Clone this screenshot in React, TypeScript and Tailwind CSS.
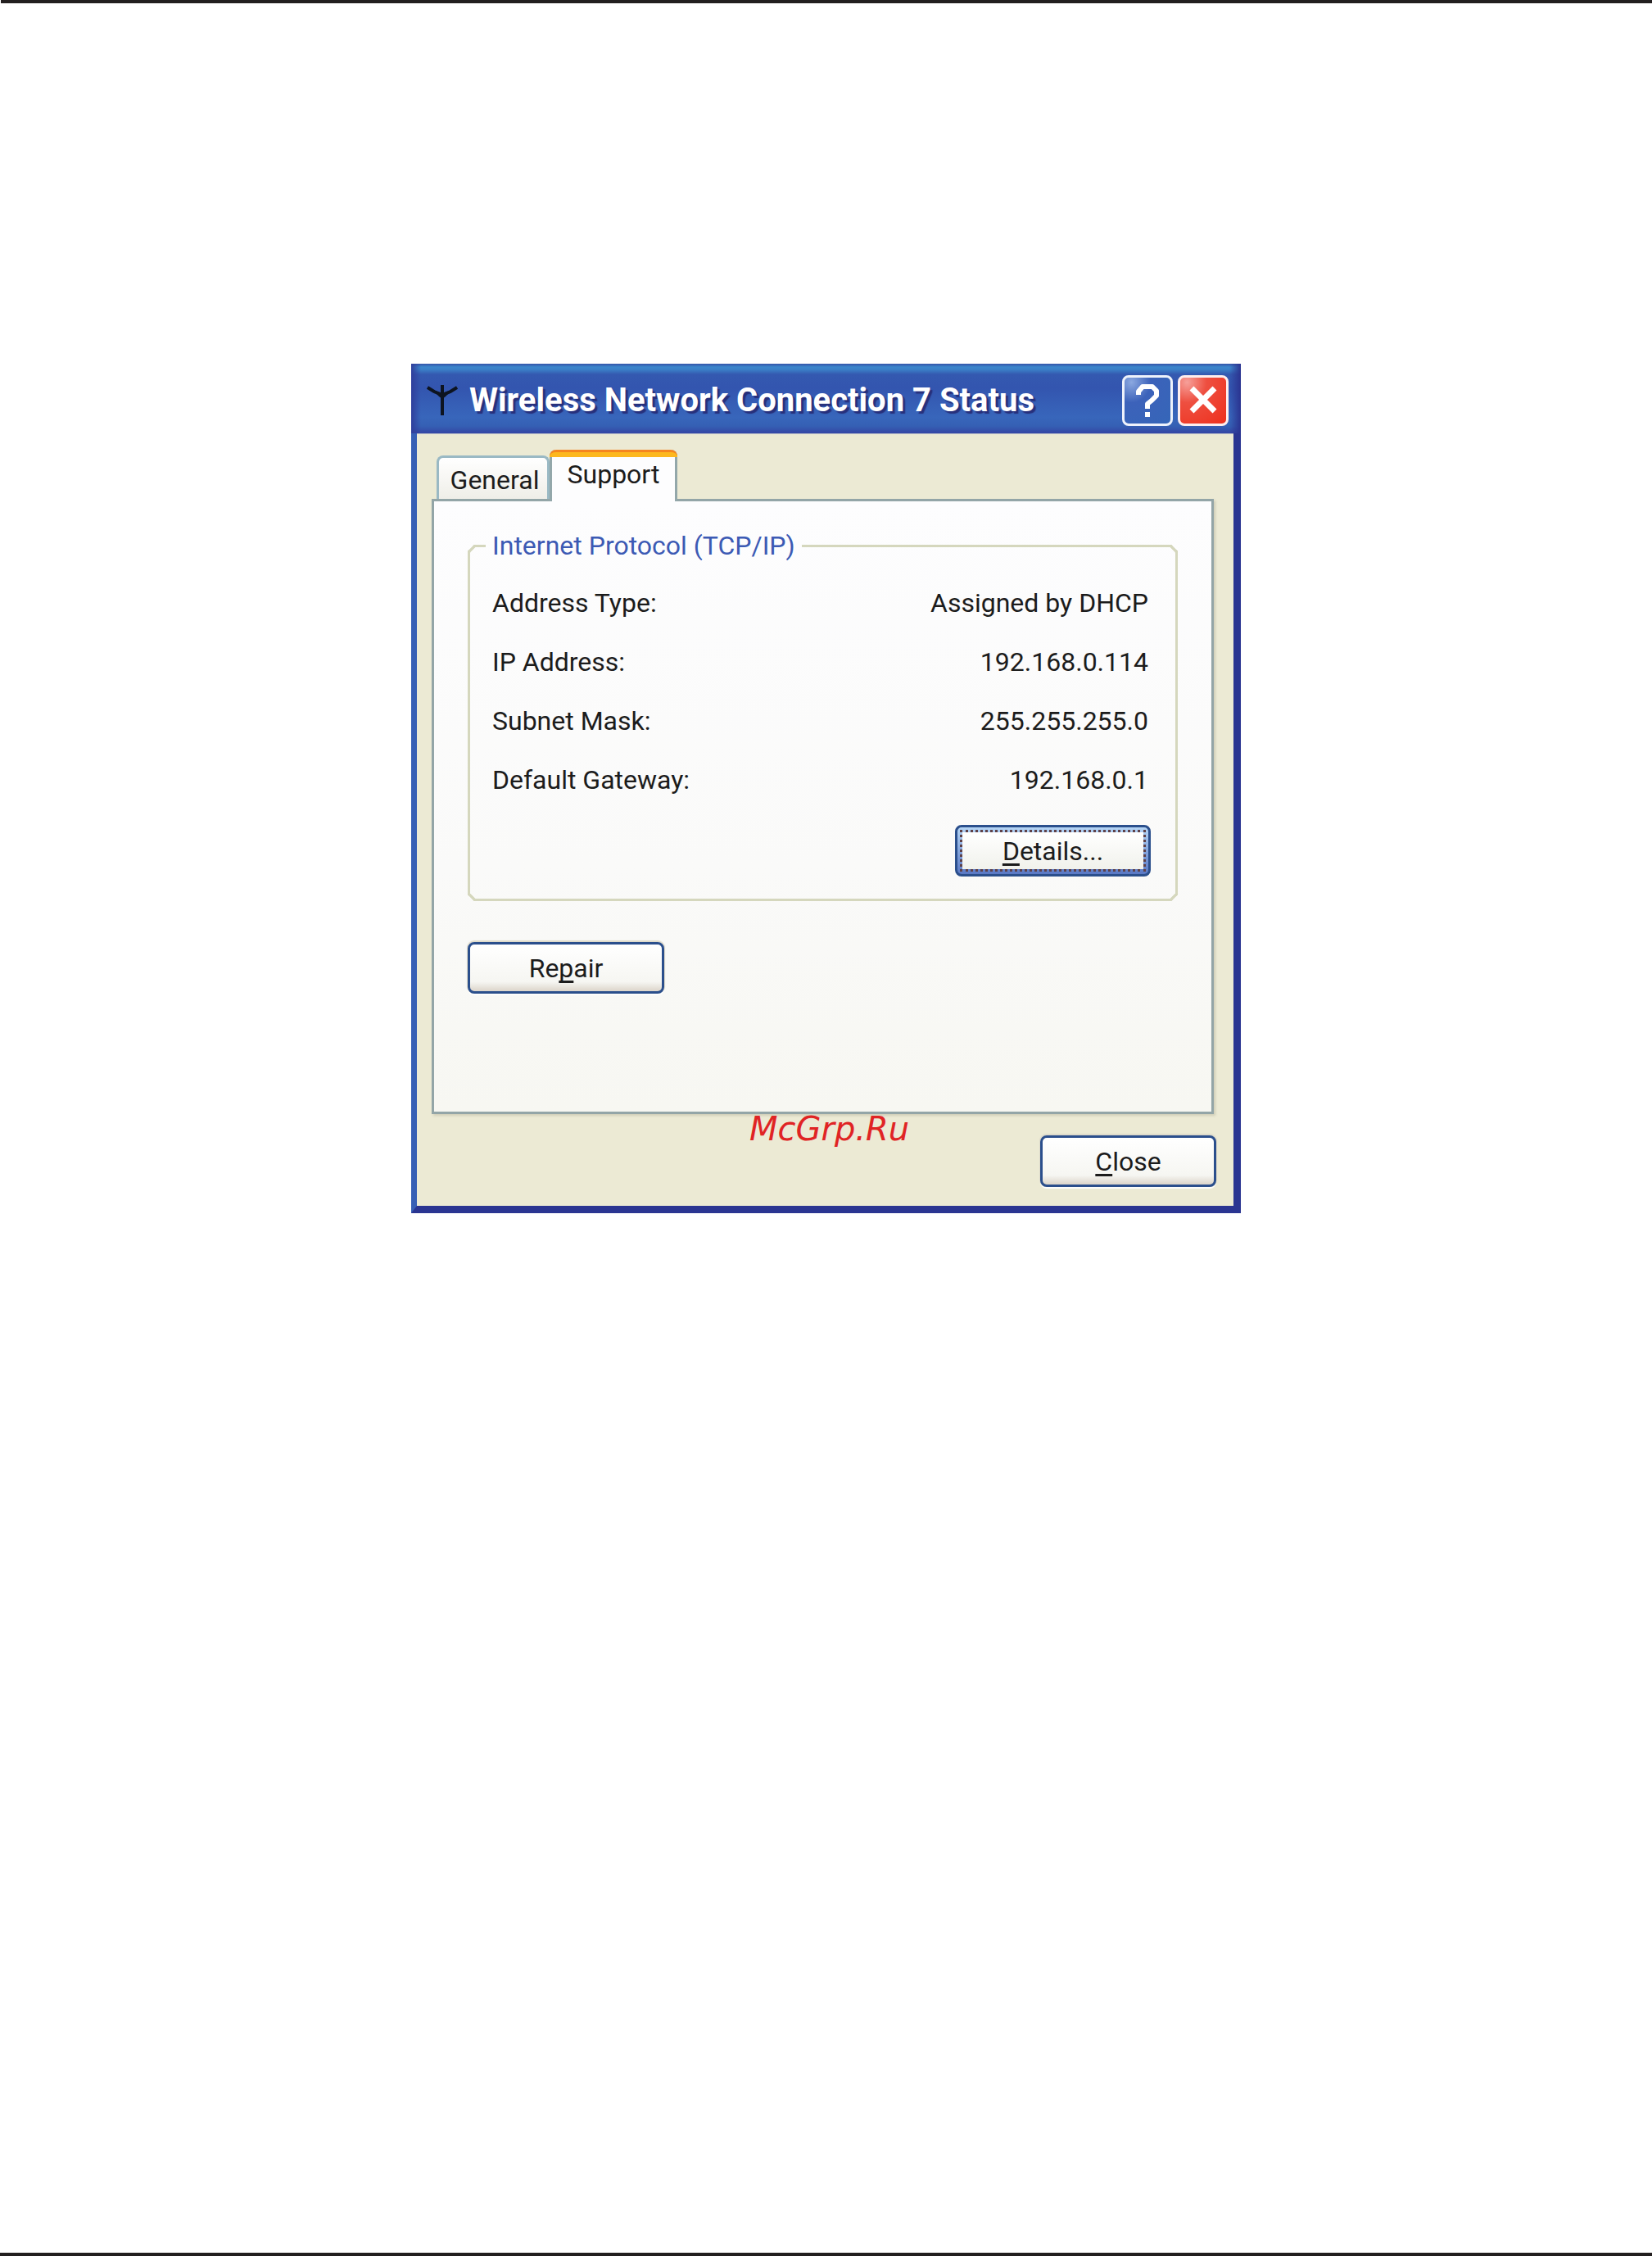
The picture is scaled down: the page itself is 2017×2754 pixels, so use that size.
import React from "react";

const details = [
  { label: "Address Type:", value: "Assigned by DHCP" },
  { label: "IP Address:", value: "192.168.0.114" },
  { label: "Subnet Mask:", value: "255.255.255.0" },
  { label: "Default Gateway:", value: "192.168.0.1" },
];

function AntennaIcon() {
  return (
    <svg viewBox="0 0 38 38" className="h-[38px] w-[38px] shrink-0" aria-hidden="true">
      <path
        d="M19 0V37M1 3L9 8L19 12L29 8L37 3"
        fill="none"
        stroke="#0d1420"
        strokeWidth="4"
      />
      <path d="M7 6L19 10L31 6L23 14L19 17L15 14Z" fill="#0d1420" />
    </svg>
  );
}

function HelpIcon() {
  return (
    <svg viewBox="3 3 56 56" className="h-full w-full" aria-hidden="true">
      <path
        d="M20 24V20L25 14H37L42 19V25L36 31L31 35V41"
        fill="none"
        stroke="#fff"
        strokeWidth="6"
        strokeLinejoin="round"
      />
      <rect x="28" y="45" width="6" height="6" fill="#fff" />
    </svg>
  );
}

function CloseIcon() {
  return (
    <svg viewBox="3 3 56 56" className="h-full w-full" aria-hidden="true">
      <path d="M17 16L45 44M45 16L17 44" fill="none" stroke="#fff" strokeWidth="7" />
    </svg>
  );
}

type PushButtonProps = {
  className: string;
  focused?: boolean;
  children: React.ReactNode;
};

function PushButton({ className, focused = false, children }: PushButtonProps) {
  return (
    <button
      type="button"
      className={`flex h-[63px] items-center justify-center rounded-lg border-3 border-[#2b4f8c] ${
        focused
          ? "bg-linear-to-b from-[#b5d5f5] to-[#5a78c4] p-[3px]"
          : "bg-linear-to-b from-white via-[#f6f6f2] via-80% to-[#dcd5ca] shadow-[0_-1px_1px_1px_#dedaca,0_2px_1px_#ffffff]"
      } ${className}`}
    >
      {focused ? (
        <span className="flex h-full w-full items-center justify-center border-3 border-dotted border-[#5e4148] bg-linear-to-b from-white to-[#f1f2ec] bg-clip-padding">
          <span>{children}</span>
        </span>
      ) : (
        <span>{children}</span>
      )}
    </button>
  );
}

function Key({ children }: { children: React.ReactNode }) {
  return (
    <span className="underline decoration-3 underline-offset-4 [text-decoration-skip-ink:none]">
      {children}
    </span>
  );
}

export default function App() {
  return (
    <div className="flex min-h-screen flex-col bg-white">
      <div className="ml-px h-1 bg-[#231f20]" />
      <main className="grow pt-[440px] pb-10">
        <section
          aria-label="Wireless Network Connection 7 Status"
          className="mx-auto flex w-[1013px] max-w-full flex-col bg-[#3559b0] font-[Roboto,'Liberation_Sans',sans-serif] text-[32px] leading-[42px] text-[#1c1c1c]"
        >
          <header className="flex h-[85px] items-center gap-3.5 pt-1 pr-[15px] pl-[19px] [background-image:linear-gradient(to_right,#2f3f9c_0,transparent_12px),linear-gradient(to_left,#2a3390_0,transparent_14px),linear-gradient(to_bottom,#3553a8_0,#3b86cc_4px,#3b80c8_7px,#3459b0_13px,#3355af_30px,#3866bb_65px,#3560b4_76px,#3448a5_84px)]">
            <AntennaIcon />
            <h1 className="grow text-[40px] font-bold whitespace-nowrap text-white [text-shadow:3px_3px_1px_#27307c]">
              Wireless Network Connection 7 Status
            </h1>
            <div className="flex gap-1.5">
              <button
                type="button"
                aria-label="Help"
                className="h-[62px] w-[62px] rounded-lg border-3 border-[#eef2fb] bg-radial-[at_15%_10%] from-[#8ba8e0] via-[#3c62ba] via-35% to-[#3566b8]"
              >
                <HelpIcon />
              </button>
              <button
                type="button"
                aria-label="Close window"
                className="h-[62px] w-[62px] rounded-lg border-3 border-[#fdeeee] bg-radial-[at_15%_10%] from-[#f6a09a] via-[#ee4f40] via-35% to-[#ee2f1c]"
              >
                <CloseIcon />
              </button>
            </div>
          </header>

          <div className="border-t-0 border-r-9 border-b-9 border-l-7 border-r-[#2a3591] border-b-[#2a3591] border-l-[#3760b5] bg-[#ecead4] pt-5 pr-6 pb-[23px] pl-[18px] shadow-[inset_0_1px_0_#b8bcc8]">
            <div role="tablist" className="relative z-10 -mb-[3px] flex items-end pl-1.5">
              <button
                type="button"
                role="tab"
                aria-selected="false"
                className="mb-[3px] h-[53px] w-[138px] rounded-t-lg border-3 border-b-0 border-[#9ab9c4] bg-linear-to-b from-white to-[#efeee8] pt-1 pl-1"
              >
                General
              </button>
              <button
                type="button"
                role="tab"
                aria-selected="true"
                aria-controls="support"
                className="flex h-[63px] w-[156px] flex-col items-center rounded-t-lg border-x-3 border-[#93a7aa] bg-[#fdfdfe]"
              >
                <span className="-mx-[3px] h-[9px] w-[156px] shrink-0 rounded-t-lg border-t-3 border-[#f5851f] bg-[#fdb81e]" />
                <span>Support</span>
              </button>
            </div>

            <div
              id="support"
              role="tabpanel"
              className="relative h-[751px] border-3 border-[#93a5a7] bg-linear-to-b from-[#fdfdfe] via-[#fafaf9] via-60% to-[#f7f7f2] pt-[33px] pr-[41px] pl-[41px] shadow-[2px_2px_3px_#cfcdb8]"
            >
              <fieldset className="rounded-lg border-3 border-[#d5d7bd] px-[27px] pb-[27px] [corner-shape:bevel]">
                <legend className="-ml-2 px-2 text-[#3c5ab4]">Internet Protocol (TCP/IP)</legend>
                <dl className="flex flex-col gap-[30px] pt-7">
                  {details.map((row) => (
                    <div key={row.label} className="flex justify-between pr-1.5">
                      <dt>{row.label}</dt>
                      <dd>{row.value}</dd>
                    </div>
                  ))}
                </dl>
                <div className="flex justify-end pt-[34px] pr-[3px]">
                  <PushButton className="w-[239px]" focused>
                    <Key>D</Key>etails...
                  </PushButton>
                </div>
              </fieldset>
              <PushButton className="mt-[50px] w-[240px]">
                Re<Key>p</Key>air
              </PushButton>
              <span className="absolute top-full left-[385px] font-['DejaVu_Sans'] text-[40px] leading-[42px] text-[#e02424] italic">
                McGrp.Ru
              </span>
            </div>

            <div className="-mr-[3px] flex justify-end pt-[26px]">
              <PushButton className="w-[215px]">
                <Key>C</Key>lose
              </PushButton>
            </div>
          </div>
        </section>
      </main>
      <div className="h-1 bg-[#231f20]" />
    </div>
  );
}
